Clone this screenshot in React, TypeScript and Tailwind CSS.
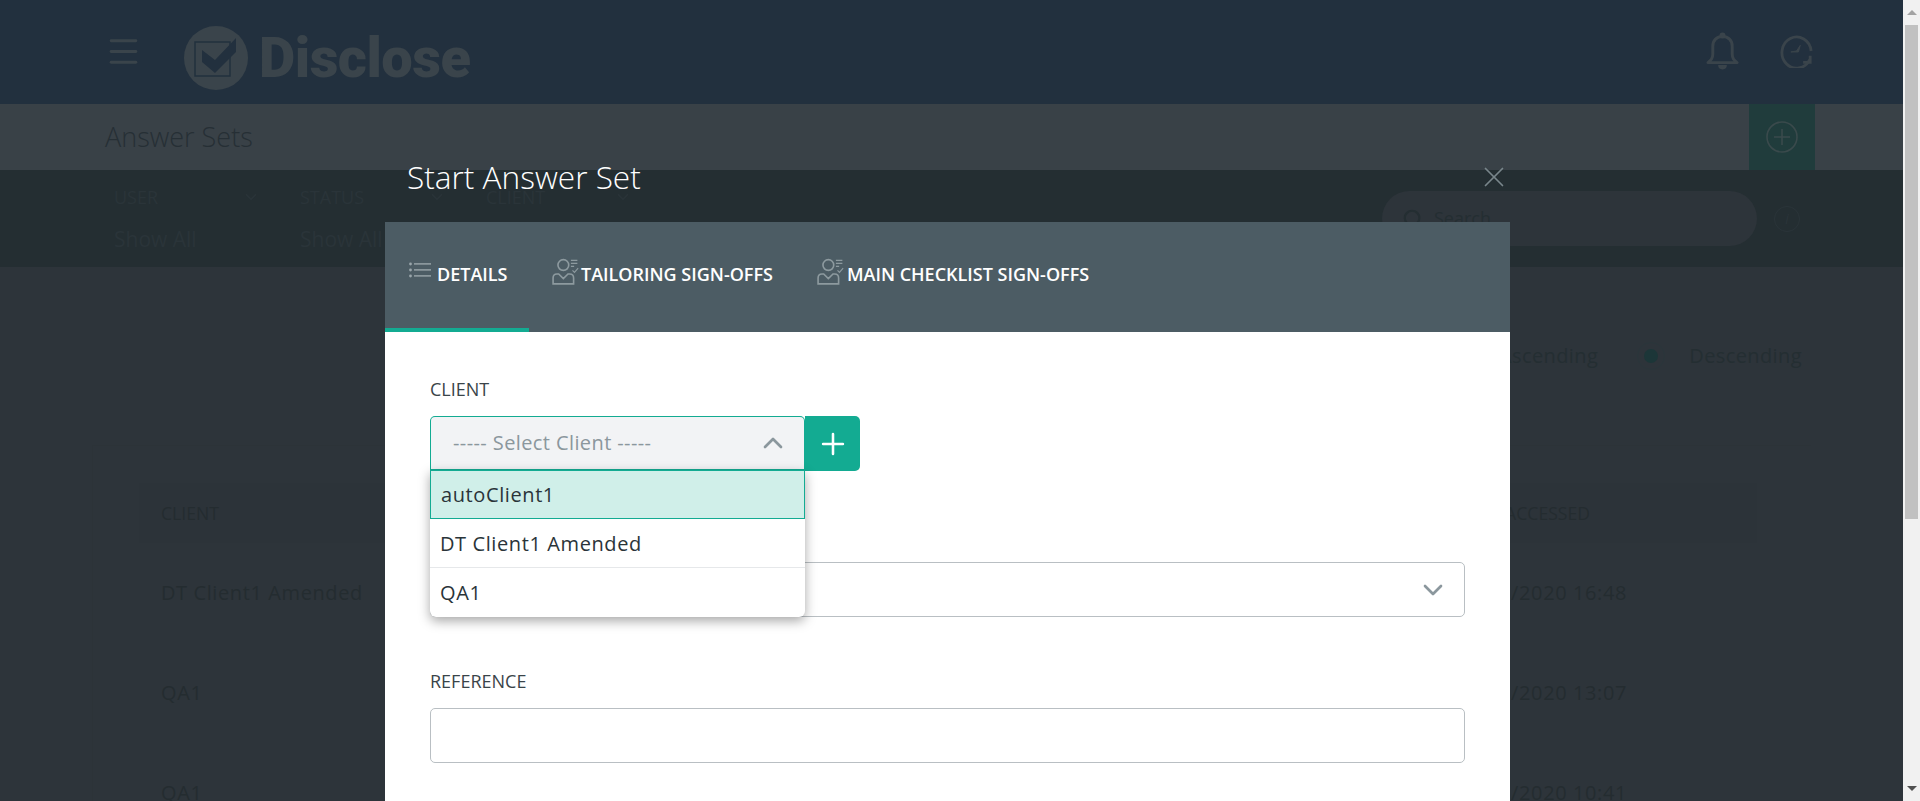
import React from 'react';
import { ChevronDown, ChevronUp, Menu, Plus, Search, X } from 'lucide-react';

// ============================================
// Icons
// ============================================

function ListIcon({ className }: { className?: string }) {
  return (
    <svg viewBox="0 0 22 16" className={className} fill="currentColor">
      <circle cx="1.5" cy="2" r="1.4" />
      <circle cx="1.5" cy="8" r="1.4" />
      <circle cx="1.5" cy="14" r="1.4" />
      <rect x="5" y="1.2" width="17" height="1.4" />
      <rect x="5" y="7.2" width="17" height="1.4" />
      <rect x="5" y="13.2" width="17" height="1.4" />
    </svg>
  );
}

function SignOffIcon({ className }: { className?: string }) {
  return (
    <svg viewBox="0 0 25 25" className={className} fill="none" stroke="currentColor" strokeWidth="1.5">
      <circle cx="10.5" cy="6.5" r="5" />
      <path d="M1 24v-5.500c0-2.200 1.600-3.700 3.600-3.700h1.600l4.300 4.200 4.300-4.200h1.600c2 0 3.600 1.500 3.600 3.700V24z" />
      <path d="M17.500 2.200h6M17.500 5h6M17.500 7.800h3" strokeWidth="1.100" />
      <path d="M19 11.500l1.800 1.800 3.400-4" strokeWidth="1.100" />
    </svg>
  );
}

function LogoMark({ className }: { className?: string }) {
  return (
    <svg viewBox="0 0 64 64" className={className}>
      <circle cx="32" cy="32" r="32" fill="#3a444b" />
      <rect x="11" y="16" width="35" height="34" fill="none" stroke="#22303e" strokeWidth="1.500" />
      <path d="M18 24l13 10L52 12v14L31 47 18 36z" fill="#22303e" />
    </svg>
  );
}

function BellIcon({ className }: { className?: string }) {
  return (
    <svg viewBox="0 0 34 38" className={className} fill="none" stroke="currentColor" strokeWidth="3" strokeLinejoin="round">
      <path d="M2 31c3-2.500 5-4 5-9v-8C7 8 11 4 17 4s10 4 10 10v8c0 5 2 6.500 5 9z" />
      <circle cx="17" cy="3" r="1.600" fill="currentColor" />
      <path d="M14 33.500c0 2 1.400 3 3 3s3-1 3-3" fill="currentColor" />
    </svg>
  );
}

function ClockIcon({ className }: { className?: string }) {
  return (
    <svg viewBox="0 0 34 36" className={className} fill="none" stroke="currentColor" strokeWidth="3">
      <path d="M31 27A15.500 16.500 0 1 1 32.500 18" />
      <path d="M24 30h7.500v-7" strokeWidth="3" />
      <path d="M11 19l6-1 4-6-2 7z" fill="currentColor" strokeWidth="1" />
    </svg>
  );
}

// ============================================
// Dimmed page behind the modal
// ============================================

function PageHeader() {
  return (
    <header className="h-[104px] bg-[#22303e] flex items-center pl-[105px] pr-[90px] text-[#3a444b]">
      <Menu className="w-[37px] h-[37px] -mt-[1px]" strokeWidth={1.9} />
      <LogoMark className="w-[64px] h-[64px] ml-[42px] mt-[12px]" />
      <span className="ml-[11px] mt-[11px] font-['Roboto',sans-serif] font-black text-[56px] leading-none tracking-[-0.5px]">
        Disclose
      </span>
      <BellIcon className="w-[33px] h-[38px] ml-auto -mt-[3px]" />
      <ClockIcon className="w-[33px] h-[34px] ml-[41px] -mt-[2px]" />
    </header>
  );
}

function FilterColumn({ label, width }: { label: string; width: string }) {
  return (
    <div className={`${width} shrink-0 -mt-[2px]`}>
      <div className="flex items-center justify-between pr-[40px] text-[18px] leading-[24px]">
        <span>{label}</span>
        <ChevronDown className="w-[18px] h-[18px]" />
      </div>
      <div className="mt-[18px] text-[21px] leading-[24px]">Show All</div>
    </div>
  );
}

function AnswerSetRow({ client, accessed }: { client: string; accessed: string }) {
  return (
    <div className="h-[100px] flex items-center justify-between pl-[22px] pr-[130px] text-[20px] tracking-[0.6px] text-[#242c30]">
      <span>{client}</span>
      <span>{accessed}</span>
    </div>
  );
}

function BackgroundPage() {
  return (
    <div className="flex-1 min-w-0 bg-[#2d343a] opacity-[0.999]">
      <PageHeader />

      <div className="h-[66px] bg-[#394147] flex items-center pl-[105px]">
        <h1 className="font-light text-[27px] text-[#262f35]">Answer Sets</h1>
        <div className="ml-auto mr-[88px] w-[66px] h-[66px] bg-[#203c3c] flex items-center justify-center text-[#3a4a4c]">
          <svg viewBox="0 0 32 32" className="w-[32px] h-[32px]" fill="none" stroke="currentColor" strokeWidth="1.600">
            <circle cx="16" cy="16" r="15" />
            <path d="M16 8v16M8 16h16" />
          </svg>
        </div>
      </div>

      <div className="h-[97px] bg-[#242e32] flex items-center pl-[114px] text-[#2a3439]">
        <FilterColumn label="USER" width="w-[186px]" />
        <FilterColumn label="STATUS" width="w-[186px]" />
        <FilterColumn label="CLIENT" width="w-[186px]" />
        <div className="ml-auto w-[375px] h-[55px] rounded-full bg-[#2d343a] flex items-center pl-[20px] text-[#242e32]">
          <Search className="w-[22px] h-[22px]" strokeWidth={2.4} />
          <span className="ml-[10px] text-[18px]">Search...</span>
        </div>
        <div className="ml-[17px] mr-[103px] w-[26px] h-[26px] rounded-full border border-[#2a3439] flex items-center justify-center text-[14px] italic">
          i
        </div>
      </div>

      <div className="h-[178px] flex items-start justify-end pt-[72px] pr-[101px] text-[#242e32] text-[20px] leading-[34px]">
        <div className="w-[28px] h-[28px] rounded-full border border-[#2a3438] mt-[3px] mr-[24px]" />
        <span className="mr-[39px] tracking-[0.4px]">Ascending</span>
        <div className="w-[28px] h-[28px] rounded-full border border-[#2a363a] flex items-center justify-center mt-[3px] mr-[24px]">
          <div className="w-[14px] h-[14px] rounded-full bg-[#1c3638]" />
        </div>
        <span className="tracking-[0.4px]">Descending</span>
      </div>

      <div className="mx-[92px] border-t border-l border-[#2c3338] pl-[46px]">
        <div className="mr-[54px] -mt-[1px] pt-[38px]">
          <div className="h-[60px] bg-[#2c3339] flex items-center justify-between pl-[22px] pr-[167px] text-[17.6px] text-[#242c30]">
            <span>CLIENT</span>
            <span>LAST ACCESSED</span>
          </div>
          <AnswerSetRow client="DT Client1 Amended" accessed="11/06/2020 16:48" />
          <AnswerSetRow client="QA1" accessed="11/06/2020 13:07" />
          <AnswerSetRow client="QA1" accessed="11/06/2020 10:41" />
        </div>
      </div>
    </div>
  );
}

// ============================================
// Browser scrollbar
// ============================================

function Scrollbar() {
  return (
    <div className="w-[17px] shrink-0 bg-[#f1f1f1] flex flex-col">
      <div className="h-[25px] flex items-center justify-center">
        <div className="w-0 h-0 border-x-[5px] border-x-transparent border-b-[5px] border-b-[#a3a3a3]" />
      </div>
      <div className="h-[494px] mx-[2px] bg-[#c1c1c1]" />
      <div className="mt-auto h-[25px] flex items-center justify-center">
        <div className="w-0 h-0 border-x-[5px] border-x-transparent border-t-[5px] border-t-[#505050]" />
      </div>
    </div>
  );
}

// ============================================
// Modal
// ============================================

function ClientSelect() {
  const options = ['DT Client1 Amended', 'QA1'];

  return (
    <div className="relative w-[375px]">
      <div className="h-[55px] rounded-t-[5px] border border-[#13ab92] border-b-[2px] bg-[#f2f3f5] flex items-center justify-between pl-[22px] pr-[15px] text-[20px] text-[#8b979d] tracking-[0.4px]">
        <span>----- Select Client -----</span>
        <ChevronUp className="w-[32px] h-[32px]" strokeWidth={2} />
      </div>
      <div className="absolute left-0 right-0 top-[54px] z-10 rounded-b-[6px] bg-white shadow-[0_4px_12px_rgba(0,0,0,0.35)] text-[20px] tracking-[0.6px] text-[#2a3439]">
        <div className="h-[49px] border border-[#13ab92] bg-[#d0efe9] flex items-center pl-[10px]">autoClient1</div>
        {options.map((option, index) => (
          <div
            key={option}
            className={`h-[49px] flex items-center pl-[10px] ${index === 0 ? 'border-b border-[#e6e8ea] pt-[1px]' : ''}`}
          >
            {option}
          </div>
        ))}
      </div>
    </div>
  );
}

function StartAnswerSetModal() {
  return (
    <div className="absolute left-[385px] top-[137px] w-[1125px]">
      <div className="h-[85px] flex items-center justify-between pl-[22px] pb-[5px] text-white">
        <h2 className="font-light text-[31.6px]">Start Answer Set</h2>
        <X className="w-[34px] h-[34px] text-[#79868b] -mr-[1px]" strokeWidth={1.2} />
      </div>

      <div className="h-[110px] bg-[#4c5c64] flex items-stretch text-white text-[18px] font-semibold">
        <div className="w-[144px] border-b-[4px] border-[#13ab92] flex items-center pl-[24px] pb-[2px]">
          <ListIcon className="w-[22px] h-[16px] text-[#9aa6ab] -mt-[8px]" />
          <span className="ml-[6px]">DETAILS</span>
        </div>
        <div className="flex items-center pl-[23px] pb-[6px]">
          <SignOffIcon className="w-[27px] h-[27px] text-[#8d9a9f] -mt-[6px]" />
          <span className="ml-[2px]">TAILORING SIGN-OFFS</span>
        </div>
        <div className="flex items-center pl-[44px] pb-[6px]">
          <SignOffIcon className="w-[27px] h-[27px] text-[#8d9a9f] -mt-[6px]" />
          <span className="ml-[3px]">MAIN CHECKLIST SIGN-OFFS</span>
        </div>
      </div>

      <div className="bg-white px-[45px] pt-[45px] pb-[120px] text-[#3a4449]">
        <label className="block text-[18px] leading-[24px]">CLIENT</label>
        <div className="mt-[15px] flex">
          <ClientSelect />
          <div className="w-[55px] h-[55px] rounded-r-[5px] bg-[#13ab92] flex items-center justify-center text-white">
            <Plus className="w-[34px] h-[34px]" strokeWidth={1.8} />
          </div>
        </div>

        <div className="mt-[91px] h-[55px] rounded-[5px] border border-[#b9bfc3] flex items-center justify-end pr-[15px] text-[#8b979d]">
          <ChevronDown className="w-[32px] h-[32px]" strokeWidth={2} />
        </div>

        <label className="block mt-[52px] text-[18px] leading-[24px]">REFERENCE</label>
        <div className="mt-[15px] h-[55px] rounded-[5px] border border-[#b9bfc3]" />
      </div>
    </div>
  );
}

export default function App() {
  return (
    <div className="relative h-[801px] w-[1920px] overflow-hidden flex font-['Open_Sans',sans-serif]">
      <BackgroundPage />
      <Scrollbar />
      <StartAnswerSetModal />
    </div>
  );
}
